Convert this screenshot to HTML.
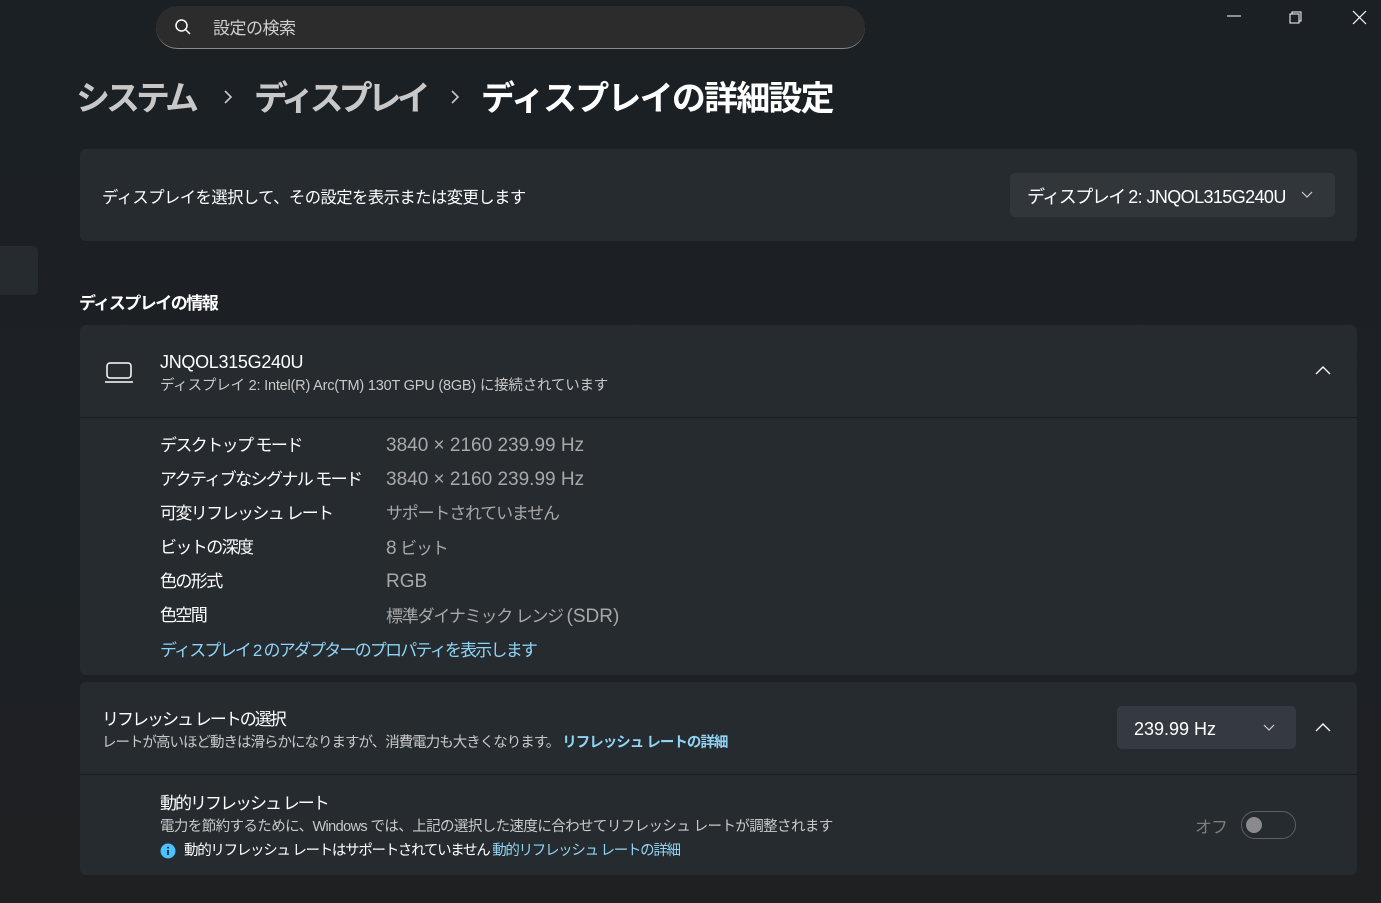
<!DOCTYPE html>
<html><head><meta charset="utf-8"><style>
*{margin:0;padding:0;box-sizing:border-box}
body{width:1381px;height:903px;overflow:hidden;background:linear-gradient(180deg,#1b2024 0%,#1c2125 60%,#1f2022 100%);font-family:"Liberation Sans","Noto Sans CJK JP",sans-serif;color:#fff;position:relative}
.a{position:absolute;white-space:nowrap;line-height:1.6}
div.a{margin-top:2px}
div.a:empty{margin-top:0}
.card{position:absolute;left:80px;width:1277px;background:#262b2f;border-radius:6px}
.sub{color:#c9c9c9}
.lab{font-size:17px;color:#fff;letter-spacing:-1.6px}
.val{font-size:17px;color:#a8a8a8;letter-spacing:-1.2px}
.n{font-size:19px;letter-spacing:0}
.link{color:#8fd4f5}
</style></head><body>
<div class="a" style="left:156px;top:6px;width:709px;height:43px;background:#2c2c2c;border-radius:22px;border-bottom:1.5px solid #8a8a8a"></div>
<svg class="a" style="left:174px;top:18px" width="18" height="18" viewBox="0 0 18 18"><circle cx="7.5" cy="7.5" r="5.5" fill="none" stroke="#fff" stroke-width="1.5"/><path d="M11.5 11.5L16 16" stroke="#fff" stroke-width="1.5"/></svg>
<div class="a" style="left:213px;top:13px;font-size:17px;color:#cfcfcf;letter-spacing:-0.5px">設定の検索</div>
<svg class="a" style="left:1225px;top:10px" width="150" height="16"><path d="M2 6H16" stroke="#fff"/><rect x="65" y="4" width="9" height="9" fill="none" stroke="#fff"/><path d="M67 4V2H76V11H74" fill="none" stroke="#fff"/><path d="M128 1L141 14M141 1L128 14" stroke="#fff" stroke-width="1.2"/></svg>
<div class="a" style="left:76px;top:70px;font-size:34px;font-weight:bold;color:#c8c8c8;letter-spacing:-4px">システム</div>
<svg class="a" style="left:222px;top:89px" width="12" height="16"><path d="M3 2L9 8L3 14" fill="none" stroke="#c8c8c8" stroke-width="1.6"/></svg>
<div class="a" style="left:254px;top:70px;font-size:34px;font-weight:bold;color:#c8c8c8;letter-spacing:-5px">ディスプレイ</div>
<svg class="a" style="left:449px;top:89px" width="12" height="16"><path d="M3 2L9 8L3 14" fill="none" stroke="#c8c8c8" stroke-width="1.6"/></svg>
<div class="a" style="left:481px;top:70px;font-size:34px;font-weight:bold;color:#fff;letter-spacing:-1.8px">ディスプレイの詳細設定</div>
<div class="a" style="left:0;top:246px;width:38px;height:49px;background:#262b2f;border-radius:0 5px 5px 0"></div>

<div class="card" style="top:149px;height:92px"></div>
<div class="a" style="left:102px;top:183px;font-size:16.3px;letter-spacing:-0.5px">ディスプレイを選択して、その設定を表示または変更します</div>
<div class="a" style="left:1010px;top:173px;width:325px;height:44px;background:#31363b;border-radius:5px"></div>
<div class="a" style="left:1027px;top:181px;font-size:18px;letter-spacing:-1.5px">ディスプレイ <span style="letter-spacing:-0.6px">2: JNQOL315G240U</span></div>
<svg class="a" style="left:1300px;top:190px" width="14" height="10"><path d="M2 2L7 7L12 2" fill="none" stroke="#ccc" stroke-width="1.2"/></svg>

<div class="a" style="left:79px;top:288px;font-size:17px;font-weight:bold;letter-spacing:-1.5px">ディスプレイの情報</div>
<div class="card" style="top:325px;height:350px"></div>
<div class="a" style="left:80px;top:417px;width:1277px;height:1px;background:#1a1d20"></div>
<svg class="a" style="left:104px;top:360px" width="30" height="24"><rect x="3" y="3" width="24" height="15" rx="3" fill="none" stroke="#fff" stroke-width="1.5"/><path d="M1 22H29" stroke="#fff" stroke-width="1.5"/></svg>
<div class="a" style="left:160px;top:346px;font-size:18px;letter-spacing:-0.3px">JNQOL315G240U</div>
<div class="a sub" style="left:160px;top:373px;font-size:14.5px;letter-spacing:-0.2px">ディスプレイ 2: Intel(R) Arc(TM) 130T GPU (8GB) に接続されています</div>
<svg class="a" style="left:1315px;top:365px" width="16" height="12"><path d="M1 9L8 2L15 9" fill="none" stroke="#fff" stroke-width="1.4"/></svg>

<div class="a lab" style="left:160px;top:430px">デスクトップ モード</div><div class="a val" style="left:386px;top:429px"><span class="n">3840 × 2160 239.99 Hz</span></div>
<div class="a lab" style="left:160px;top:464px">アクティブなシグナル モード</div><div class="a val" style="left:386px;top:463px"><span class="n">3840 × 2160 239.99 Hz</span></div>
<div class="a lab" style="left:160px;top:498px">可変リフレッシュ レート</div><div class="a val" style="left:386px;top:498px">サポートされていません</div>
<div class="a lab" style="left:160px;top:532px">ビットの深度</div><div class="a val" style="left:386px;top:532px"><span class="n">8</span> ビット</div>
<div class="a lab" style="left:160px;top:566px">色の形式</div><div class="a val" style="left:386px;top:565px"><span class="n">RGB</span></div>
<div class="a lab" style="left:160px;top:600px">色空間</div><div class="a val" style="left:386px;top:600px">標準ダイナミック レンジ <span class="n">(SDR)</span></div>
<div class="a link" style="left:160px;top:635px;font-size:17px;letter-spacing:-1.8px">ディスプレイ 2 のアダプターのプロパティを表示します</div>

<div class="card" style="top:682px;height:193px"></div>
<div class="a" style="left:80px;top:774px;width:1277px;height:1px;background:#1a1d20"></div>
<div class="a" style="left:102px;top:704px;font-size:17px;letter-spacing:-2px">リフレッシュ レートの選択</div>
<div class="a sub" style="left:102px;top:730px;font-size:14.5px;letter-spacing:-1px">レートが高いほど動きは滑らかになりますが、消費電力も大きくなります。 <span class="link" style="font-weight:bold">リフレッシュ レートの詳細</span></div>
<div class="a" style="left:1117px;top:706px;width:179px;height:43px;background:#353a40;border-radius:5px"></div>
<div class="a" style="left:1134px;top:713px;font-size:18px">239.99 Hz</div>
<svg class="a" style="left:1262px;top:723px" width="14" height="10"><path d="M2 2L7 7L12 2" fill="none" stroke="#ccc" stroke-width="1.2"/></svg>
<svg class="a" style="left:1315px;top:722px" width="16" height="12"><path d="M1 9L8 2L15 9" fill="none" stroke="#fff" stroke-width="1.4"/></svg>

<div class="a" style="left:160px;top:788px;font-size:17px;letter-spacing:-2px">動的リフレッシュ レート</div>
<div class="a sub" style="left:160px;top:814px;font-size:14.5px;letter-spacing:-0.6px">電力を節約するために、Windows では、上記の選択した速度に合わせてリフレッシュ レートが調整されます</div>
<svg class="a" style="left:160px;top:843px" width="16" height="16"><circle cx="8" cy="8" r="7.5" fill="#4cc2ff"/><path d="M8 7V12" stroke="#1a1a1a" stroke-width="1.6"/><circle cx="8" cy="4.6" r="1" fill="#1a1a1a"/></svg>
<div class="a" style="left:184px;top:838px;font-size:14.5px;letter-spacing:-1.3px">動的リフレッシュ レートはサポートされていません <span class="link">動的リフレッシュ レートの詳細</span></div>
<div class="a" style="left:1195px;top:812px;font-size:17px;color:#7c7c7c;letter-spacing:-1px">オフ</div>
<div class="a" style="left:1241px;top:811px;width:55px;height:28px;border:1.5px solid #5c5f63;border-radius:14px"></div>
<div class="a" style="left:1246px;top:817px;width:16px;height:16px;border-radius:50%;background:#8a8a8e"></div>
</body></html>
